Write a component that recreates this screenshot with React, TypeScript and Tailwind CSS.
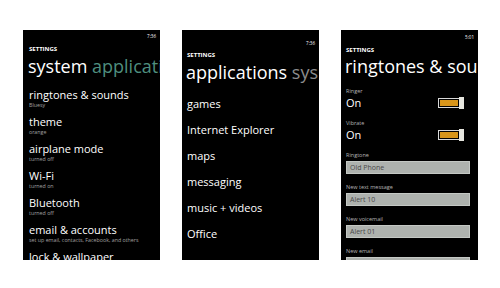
const systemItems = [
  { title: "ringtones & sounds", sub: "Bluesy" },
  { title: "theme", sub: "orange" },
  { title: "airplane mode", sub: "turned off" },
  { title: "Wi-Fi", sub: "turned on" },
  { title: "Bluetooth", sub: "turned off" },
  { title: "email & accounts", sub: "set up email, contacts, Facebook, and others" },
  { title: "lock & wallpaper", sub: "" },
];

const appItems = ["games", "Internet Explorer", "maps", "messaging", "music + videos", "Office"];

const fields = [
  { label: "Ringtone", value: "Old Phone" },
  { label: "New text message", value: "Alert 10" },
  { label: "New voicemail", value: "Alert 01" },
  { label: "New email", value: "" },
];

function Toggle() {
  return (
    <div className="relative w-[26px] h-[10px] border border-[#d8d8d8] p-[1px] bg-black">
      <div className="h-full w-[18px] bg-[#d8951a]" />
      <div className="absolute right-[-1px] top-[-2px] w-[5px] h-[12px] bg-[#e6e6df]" />
    </div>
  );
}

export default function App() {
  return (
    <div className="w-[500px] h-[288px] bg-white flex gap-[22px] pl-[23px] pt-[30px] font-['Open_Sans',sans-serif]">
      {/* system pivot */}
      <div className="w-[137px] h-[230px] bg-black overflow-hidden text-white">
        <div className="pt-[3px] pr-[4px] text-right text-[4.5px] leading-[6px]">7:36</div>
        <div className="pl-[6px] mt-[6px] text-[6px] leading-[8px] font-bold">SETTINGS</div>
        <div className="pl-[5px] mt-[1px] text-[18px] leading-[24px] whitespace-nowrap">
          system <span className="text-[#4f8f7f]">applicati</span>
        </div>
        <div className="pl-[6px] mt-[10px]">
          {systemItems.map((item) => (
            <div key={item.title} className="h-[27px] whitespace-nowrap">
              <div className="text-[11px] leading-[13px]">{item.title}</div>
              <div className="mt-[1px] text-[5.3px] leading-[6px] text-[#a0a0a0]">{item.sub}</div>
            </div>
          ))}
        </div>
      </div>

      {/* applications pivot */}
      <div className="w-[137px] h-[230px] bg-black overflow-hidden text-white">
        <div className="pt-[10px] pr-[4px] text-right text-[4.5px] leading-[6px]">7:36</div>
        <div className="pl-[5px] mt-[5px] text-[6px] leading-[8px] font-bold">SETTINGS</div>
        <div className="pl-[4px] mt-[1px] text-[18px] leading-[24px] whitespace-nowrap">
          applications <span className="text-[#8c8c8c]">sys</span>
        </div>
        <div className="pl-[5px] mt-[7px]">
          {appItems.map((item) => (
            <div key={item} className="text-[11px] leading-[26px] whitespace-nowrap">
              {item}
            </div>
          ))}
        </div>
      </div>

      {/* ringtones & sounds */}
      <div className="w-[137px] h-[230px] bg-black overflow-hidden text-white">
        <div className="pt-[4px] pr-[4px] text-right text-[4.5px] leading-[6px]">5:01</div>
        <div className="pl-[5px] mt-[6px] text-[6px] leading-[8px] font-bold">SETTINGS</div>
        <div className="pl-[4px] text-[18px] leading-[24px] whitespace-nowrap">ringtones &amp; sounds</div>
        <div className="pl-[5px] pr-[14px] mt-[10px]">
          {["Ringer", "Vibrate"].map((label) => (
            <div key={label} className="h-[32px]">
              <div className="text-[5.5px] leading-[6px] text-[#b4b4b4]">{label}</div>
              <div className="mt-[3px] h-[12px] flex items-center justify-between">
                <span className="text-[11px] leading-[12px]">On</span>
                <Toggle />
              </div>
            </div>
          ))}
          {fields.map((f) => (
            <div key={f.label} className="h-[32px]">
              <div className="text-[5.5px] leading-[6px] text-[#b4b4b4] whitespace-nowrap">{f.label}</div>
              <div className="mt-[3px] mr-[-6px] h-[13px] bg-[#aeb2ae] border border-[#c4c8c4] pl-[3px] text-[7px] leading-[11px] text-[#4a4a4a]">
                {f.value}
              </div>
            </div>
          ))}
        </div>
      </div>
    </div>
  );
}
